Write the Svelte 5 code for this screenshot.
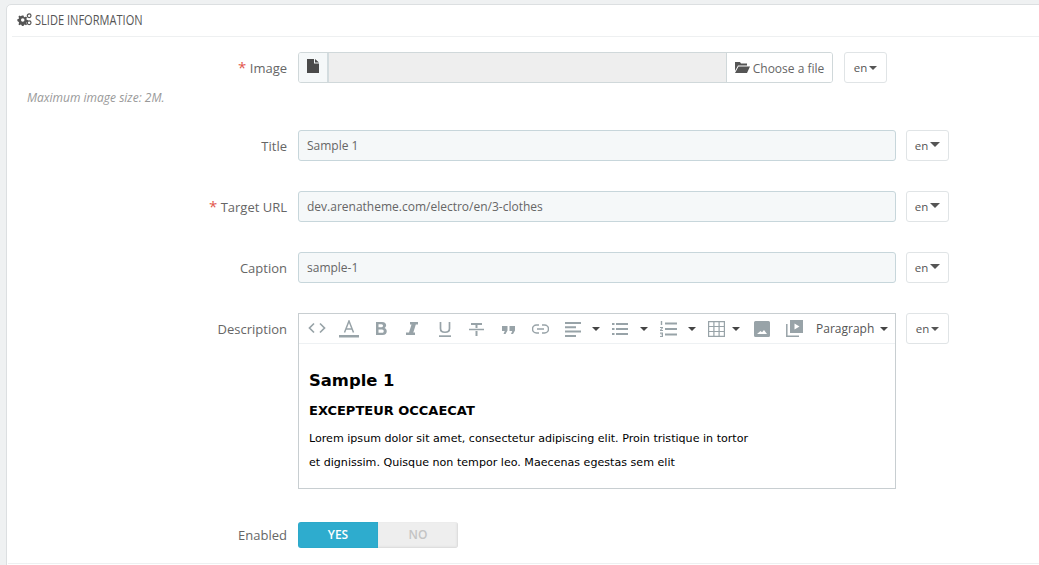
<script>
  const textRows = [
    { label: "Title", value: "Sample 1" },
    { label: "Target URL", value: "dev.arenatheme.com/electro/en/3-clothes", required: true },
    { label: "Caption", value: "sample-1" }
  ];
</script>

<div class="page">
  <section class="panel">
    <h3 class="heading">
      <svg class="cogs" viewBox="0 0 16 14" width="15" height="13">
        <path fill="#555" fill-rule="evenodd" d="M5.200 2.600h1.800l.3 1.400 1 .5 1.300-.7 1.200 1.300-.8 1.200.4 1 1.500.4v1.800l-1.500.3-.4 1 .8 1.300-1.200 1.200-1.300-.8-1 .5-.3 1.400H5.200l-.3-1.400-1-.5-1.300.8-1.200-1.200.8-1.300-.4-1L.3 8.500V6.700l1.500-.4.4-1-.8-1.200 1.200-1.300 1.300.7 1-.5zM6.100 5.700a1.900 1.900 0 1 0 0 3.800 1.900 1.900 0 0 0 0-3.800z" />
        <circle cx="13" cy="3" r="2" fill="none" stroke="#555" stroke-width="1.300" />
        <circle cx="13" cy="10.500" r="2" fill="none" stroke="#555" stroke-width="1.300" />
      </svg>
      <span class="heading-text">SLIDE INFORMATION</span>
    </h3>

    <div class="form">
      <div class="row image-row">
        <span class="label"><i>*</i> Image</span>
        <div class="file-group">
          <span class="file-icon">
            <svg viewBox="0 0 12 14" width="12" height="14">
              <path fill="#4a4a4a" d="M0 0h7v4.500h5V14H0zM8 0l4 3.500H8z" />
            </svg>
          </span>
          <span class="file-name"></span>
          <span class="file-button">
            <svg viewBox="0 0 15 12" width="15" height="12">
              <path fill="#555" d="M0 0h5l1 1.500h6V3.500H3L0 9zM3.500 4.500H15L12 11H0z" />
            </svg>
            Choose a file
          </span>
        </div>
        <span class="lang lang-near">en <b class="caret small"></b></span>
      </div>
      <p class="help">Maximum image size: 2M.</p>

      {#each textRows as row}
        <div class="row">
          <span class="label">{#if row.required}<i>*</i>{" "}{/if}{row.label}</span>
          <div class="text-input">{row.value}</div>
          <span class="lang">en <b class="caret"></b></span>
        </div>
      {/each}

      <div class="row desc-row">
        <span class="label desc-label">Description</span>
        <div class="editor">
          <div class="toolbar">
            <svg class="tool" style="left:9px;top:8px" width="18" height="12" viewBox="0 0 18 12"><path fill="none" stroke="#98a3a8" stroke-width="1.700" d="M6 1.500 1.500 6 6 10.500M12 1.500 16.500 6 12 10.500" /></svg>
            <svg class="tool" style="left:40px;top:6px" width="20" height="18" viewBox="0 0 20 18"><path fill="none" stroke="#98a3a8" stroke-width="1.500" d="M5.500 12.500 10 1l4.500 11.500M7 9h6" /><rect y="15" width="20" height="2.500" fill="#98a3a8" /></svg>
            <svg class="tool" style="left:76px;top:8px" width="12" height="13" viewBox="0 0 12 13"><path fill="#98a3a8" fill-rule="evenodd" d="M1 0h6c5 0 5 5 2.500 6 3.500 1 3 7-2 7H1zM3.500 2.200v3h3c2 0 2-3 0-3zM3.500 7.500v3.300h3.500c2.300 0 2.300-3.300 0-3.300z" /></svg>
            <svg class="tool" style="left:107px;top:8px" width="12" height="13" viewBox="0 0 12 13"><path fill="#98a3a8" d="M4 0h8v2.500H9.800L7.300 10.500H9V13H0v-2.500h3l2.500-8H4z" /></svg>
            <svg class="tool" style="left:139px;top:8px" width="14" height="15" viewBox="0 0 14 15"><path fill="none" stroke="#98a3a8" stroke-width="1.700" d="M2.500 0v6.500c0 5 9 5 9 0V0" /><rect x="1" y="13.300" width="12" height="1.700" fill="#98a3a8" /></svg>
            <svg class="tool" style="left:170px;top:9px" width="15" height="13" viewBox="0 0 15 13"><path fill="#98a3a8" d="M2 0h11v2H8.500v3h-2V2H2zM0 5.700h15v1.600H0zM6.500 8h2v5h-2z" /></svg>
            <svg class="tool" style="left:203px;top:12px" width="13" height="8" viewBox="0 0 13 8"><path fill="#98a3a8" d="M0 0h5.500v4.500L3.500 8H1.500l1.300-3H0zM7.500 0H13v4.500L11 8H9l1.300-3H7.500z" /></svg>
            <svg class="tool" style="left:233px;top:10px" width="17" height="10" viewBox="0 0 17 10"><path fill="none" stroke="#98a3a8" stroke-width="1.500" d="M7 1H4.500a4 4 0 0 0 0 8H7M10 1h2.500a4 4 0 0 1 0 8H10M5 5h7" /></svg>
            <svg class="tool" style="left:266px;top:8px" width="16" height="15" viewBox="0 0 16 15"><path fill="#98a3a8" d="M0 0h16v2H0zM0 4.300h11v2H0zM0 8.600h16v2H0zM0 13h11v2H0z" /></svg>
            <b class="tool-caret" style="left:293px"></b>
            <svg class="tool" style="left:313px;top:9px" width="16" height="12" viewBox="0 0 16 12"><path fill="#98a3a8" d="M0 0h2.500v2H0zM4 0h12v2H4zM0 5h2.500v2H0zM4 5h12v2H4zM0 10h2.500v2H0zM4 10h12v2H4z" /></svg>
            <b class="tool-caret" style="left:341px"></b>
            <svg class="tool" style="left:361px;top:7px" width="17" height="16" viewBox="0 0 17 16"><path fill="#98a3a8" d="M5 1.500h12v2H5zM5 7h12v2H5zM5 12.500h12v2H5zM.8 0h1.400v4H.8zM0 6h3v1L1.200 9H3v1H0V9l1.800-2H0zM0 11.500h3V16H0v-1h2v-.8H.7v-.8H2v-.7H0z" /></svg>
            <b class="tool-caret" style="left:389px"></b>
            <svg class="tool" style="left:409px;top:7px" width="17" height="16" viewBox="0 0 17 16"><path fill="none" stroke="#98a3a8" stroke-width="1.200" d="M.6.600h15.800v14.800H.6zM5.900.6v14.800M11.100.6v14.800M.6 5.500h15.800M.6 10.500h15.800" /></svg>
            <b class="tool-caret" style="left:433px"></b>
            <svg class="tool" style="left:455px;top:7px" width="16" height="16" viewBox="0 0 16 16"><path fill="#98a3a8" fill-rule="evenodd" d="M1.500 0h13A1.500 1.500 0 0 1 16 1.500v13a1.500 1.500 0 0 1-1.500 1.500h-13A1.500 1.500 0 0 1 0 14.500v-13A1.500 1.500 0 0 1 1.500 0zM3 13h10l-3-4-2 2.200L6.500 10z" /></svg>
            <svg class="tool" style="left:487px;top:6px" width="17" height="17" viewBox="0 0 17 17"><path fill="#98a3a8" fill-rule="evenodd" d="M4 0h13v13H4zM8.500 3.500v6L13.500 6.500z" /><path fill="none" stroke="#98a3a8" stroke-width="1.500" d="M.8 4v12.200H13" /></svg>
            <span class="format">Paragraph</span>
            <b class="tool-caret" style="left:581px"></b>
          </div>
          <div class="content">
            <h1>Sample 1</h1>
            <h4>EXCEPTEUR OCCAECAT</h4>
            <p>Lorem ipsum dolor sit amet, consectetur adipiscing elit. Proin tristique in tortor</p>
            <p>et dignissim. Quisque non tempor leo. Maecenas egestas sem elit</p>
          </div>
        </div>
        <span class="lang desc-lang">en <b class="caret small"></b></span>
      </div>

      <div class="row switch-row">
        <span class="label">Enabled</span>
        <div class="switch">
          <span class="yes">YES</span>
          <span class="no">NO</span>
        </div>
      </div>
    </div>
    <div class="footer"></div>
  </section>
</div>

<style>
  :global(body) {
    background: #eff1f2;
    overflow: hidden;
  }

  .page {
    height: 565px;
    overflow: hidden;
    padding: 4px 0 0 6px;
    box-sizing: border-box;
    font-family: "Open Sans", sans-serif;
    font-size: 12px;
    color: #555;
  }

  .panel {
    height: 600px;
    box-sizing: border-box;
    width: 1060px;
    background: #fff;
    border: 1px solid #dcdfe1;
    border-radius: 5px 0 0 0;
    padding: 0 0 0 4px;
  }

  .heading {
    margin: 0;
    height: 32px;
    display: flex;
    align-items: center;
    gap: 3px;
    padding: 0 0 3px 1px;
    box-sizing: border-box;
    border-bottom: 1px solid #eef0f1;
    margin-left: 1px;
    font-weight: 400;
    font-size: 14px;
    color: #555;
  }

  .cogs {
    flex: none;
    margin-left: 4px;
  }

  .heading-text {
    display: inline-block;
    transform: scaleX(0.79);
    transform-origin: left center;
    white-space: nowrap;
  }

  .form {
    padding: 15px 0 0 1px;
  }

  .row {
    display: flex;
    align-items: center;
    height: 31px;
    margin-bottom: 30px;
  }

  .label {
    flex: none;
    width: 275px;
    margin-right: 11px;
    text-align: right;
    font-size: 13px;
    line-height: 30px;
    color: #666;
    white-space: nowrap;
  }

  .label i {
    font-style: normal;
    color: #e2574c;
    font-size: 15px;
  }

  .image-row {
    margin-bottom: 0;
  }

  .file-group {
    display: flex;
    width: 535px;
    height: 31px;
    box-sizing: border-box;
    border: 1px solid #d0d8da;
    border-radius: 3px;
    overflow: hidden;
  }

  .file-icon {
    flex: none;
    width: 30px;
    background: #f5f8f9;
    border-right: 2px solid #d3dcdf;
    display: flex;
    justify-content: center;
    padding-top: 6px;
    box-sizing: border-box;
  }

  .file-name {
    flex: 1;
    background: #eeeeee;
  }

  .file-button {
    flex: none;
    width: 106px;
    box-sizing: border-box;
    background: #fff;
    border-left: 1px solid #d0d8da;
    display: flex;
    align-items: center;
    justify-content: center;
    gap: 3px;
    padding-top: 1px;
    color: #666;
  }

  .lang {
    flex: none;
    width: 43px;
    height: 31px;
    box-sizing: border-box;
    margin-left: 10px;
    border: 1px solid #e0e4e6;
    border-radius: 3px;
    background: #fff;
    display: flex;
    align-items: center;
    justify-content: center;
    gap: 2px;
    font-size: 11.500px;
    color: #555;
  }

  .lang-near {
    margin-left: 11px;
  }

  .caret {
    width: 0;
    height: 0;
    border-left: 5px solid transparent;
    border-right: 5px solid transparent;
    border-top: 5px solid #555;
    margin-top: -2px;
  }

  .caret.small {
    border-left-width: 4px;
    border-right-width: 4px;
    border-top-width: 4px;
    margin-top: 1px;
  }

  .help {
    margin: 7px 0 0 15px;
    height: 40px;
    font-size: 12px;
    font-style: italic;
    color: #999;
    line-height: 15px;
  }

  .text-input {
    width: 598px;
    height: 31px;
    box-sizing: border-box;
    padding: 0 8px;
    border: 1px solid #c7d6db;
    border-radius: 3px;
    background: #f5f8f9;
    line-height: 29px;
    font-size: 12px;
    color: #666;
  }

  .desc-row {
    height: 176px;
    align-items: flex-start;
    margin-bottom: 33px;
  }

  .desc-label {
    margin-top: 1px;
  }

  .desc-lang {
    margin-top: 0;
  }

  .editor {
    width: 598px;
    height: 176px;
    box-sizing: border-box;
    border: 1px solid #c8ced1;
    background: #fff;
  }

  .toolbar {
    position: relative;
    height: 29px;
    border-bottom: 1px solid #eef1f3;
  }

  .tool {
    position: absolute;
    top: 9px;
  }

  .tool-caret {
    position: absolute;
    top: 13px;
    width: 0;
    height: 0;
    border-left: 4px solid transparent;
    border-right: 4px solid transparent;
    border-top: 4px solid #444;
  }

  .format {
    position: absolute;
    left: 517px;
    top: 6px;
    font-size: 12px;
    color: #555;
  }

  .content {
    padding: 26px 10px 0;
    font-family: "DejaVu Sans", sans-serif;
    color: #000;
  }

  .content h1 {
    margin: 0;
    font-size: 16.400px;
    line-height: 22px;
    font-weight: 700;
  }

  .content h4 {
    margin: 11px 0 0;
    font-size: 13px;
    line-height: 16px;
    font-weight: 700;
  }

  .content p {
    margin: 0;
    font-size: 11.100px;
    line-height: 24px;
  }

  .content h4 + p {
    margin-top: 8px;
  }

  .switch-row {
    height: 26px;
    margin-bottom: 0;
  }

  .switch {
    display: flex;
    width: 160px;
    height: 26px;
    border-radius: 3px;
    overflow: hidden;
    font-size: 12px;
    font-weight: 600;
    text-align: center;
    line-height: 26px;
  }

  .yes {
    flex: 1;
    background: #2eacce;
    color: #fff;
    box-shadow: inset 0 0 1px #1f8fae;
  }

  .no {
    flex: 1;
    background: #eeeeee;
    color: #c4c4c4;
    box-shadow: inset -1px -1px 2px #d8d8d8;
  }

  .footer {
    margin-top: 15px;
    margin-left: -3px;
    border-top: 1px solid #eef0f1;
  }
</style>
